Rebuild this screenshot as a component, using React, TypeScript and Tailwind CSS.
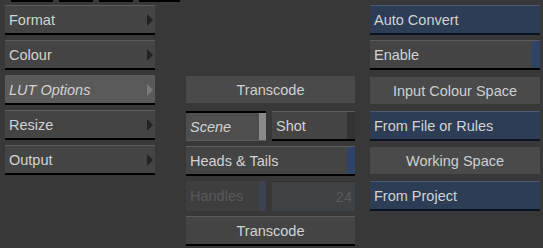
const font = { fontFamily: '"Liberation Sans", "DejaVu Sans", sans-serif' };

function Arrow({ light }: { light?: boolean }) {
  return (
    <svg width="6" height="12" viewBox="0 0 6 12" className="shrink-0">
      <polygon points="0,0 6,6 0,12" fill={light ? "#7a7a7a" : "#222222"} />
    </svg>
  );
}

function MenuButton({ label, active }: { label: string; active?: boolean }) {
  return (
    <div
      className={`h-[30px] flex items-center justify-between pl-[4px] pr-[2px] border-t border-t-[#5c5c5c] border-b-2 border-b-black ${
        active ? "bg-[#5a5a5a] italic" : "bg-[#444444]"
      }`}
    >
      <span className="pt-[2px]">{label}</span>
      <Arrow light={active} />
    </div>
  );
}

function Flat({ label }: { label: string }) {
  return (
    <div className="h-[27px] flex items-center justify-center pt-[2px] bg-[#4a4a4a] text-[#cfcfcf]">{label}</div>
  );
}

function Blue({ label }: { label: string }) {
  return (
    <div className="h-[30px] flex items-center pl-[4px] pt-[2px] bg-[#2c3d55] border-t border-t-[#4a5a72] border-b-2 border-b-[#0c1220]">
      {label}
    </div>
  );
}

function Toggle({ label, on }: { label: string; on?: boolean }) {
  return (
    <div className="h-[30px] flex items-stretch bg-[#444444] border-t border-t-[#5c5c5c] border-b-2 border-b-black">
      <span className="flex-1 flex items-center pl-[4px] pt-[2px]">{label}</span>
      <span className={`w-[8px] ${on ? "bg-[#2e4466]" : "bg-[#353535]"}`} />
    </div>
  );
}

export default function App() {
  return (
    <div className="w-[543px] h-[248px] bg-[#383838] text-[#d2d2d2] text-[14.5px] overflow-hidden" style={font}>
      {/* top tab edges */}
      <div className="h-[2px] flex">
        <div className="ml-[11px] w-[42px] bg-black" />
        <div className="ml-[6px] w-[34px] bg-black" />
        <div className="ml-[6px] w-[34px] bg-black" />
        <div className="ml-[6px] w-[41px] bg-black" />
      </div>

      <div className="flex pt-[3px] pl-[5px]">
        {/* left menu */}
        <div className="w-[150px] flex flex-col gap-[5px]">
          <MenuButton label="Format" />
          <MenuButton label="Colour" />
          <MenuButton label="LUT Options" active />
          <MenuButton label="Resize" />
          <MenuButton label="Output" />
        </div>

        {/* middle column */}
        <div className="w-[169px] ml-[31px] pt-[71px] flex flex-col">
          <Flat label="Transcode" />
          <div className="mt-[8px] flex gap-[6px]">
            <div className="w-[80px] h-[30px] flex items-stretch bg-[#4e4e4e] border-t-2 border-t-black border-b border-b-[#5a5a5a]">
              <span className="flex-1 flex items-center pl-[4px] pt-[2px] italic">Scene</span>
              <span className="w-[7px] bg-[#8a8a8a]" />
            </div>
            <div className="flex-1 h-[30px] flex items-stretch bg-[#444444] border-t border-t-[#5c5c5c] border-b-2 border-b-black">
              <span className="flex-1 flex items-center pl-[4px] pt-[2px]">Shot</span>
              <span className="w-[8px] bg-[#333333]" />
            </div>
          </div>
          <div className="mt-[5px]">
            <Toggle label="Heads & Tails" on />
          </div>
          <div className="mt-[5px] flex gap-[6px] text-[#595959]">
            <div className="w-[80px] h-[30px] flex items-stretch bg-[#3e3e3e]">
              <span className="flex-1 flex items-center pl-[4px] pt-[2px]">Handles</span>
              <span className="w-[7px] bg-[#3b4250]" />
            </div>
            <div className="flex-1 h-[30px] flex items-center justify-end pr-[3px] pt-[2px] bg-[#3f4245] border-t border-t-[#303030]">
              24
            </div>
          </div>
          <div className="mt-[5px] h-[30px] flex items-center justify-center pt-[2px] bg-[#444444] border-t border-t-[#5c5c5c] border-b-2 border-b-black">
            Transcode
          </div>
        </div>

        {/* right column */}
        <div className="w-[170px] ml-[15px] flex flex-col">
          <Blue label="Auto Convert" />
          <div className="mt-[5px]">
            <Toggle label="Enable" on />
          </div>
          <div className="mt-[7px]">
            <Flat label="Input Colour Space" />
          </div>
          <div className="mt-[7px]">
            <Blue label="From File or Rules" />
          </div>
          <div className="mt-[6px]">
            <Flat label="Working Space" />
          </div>
          <div className="mt-[7px]">
            <Blue label="From Project" />
          </div>
        </div>
      </div>
    </div>
  );
}
